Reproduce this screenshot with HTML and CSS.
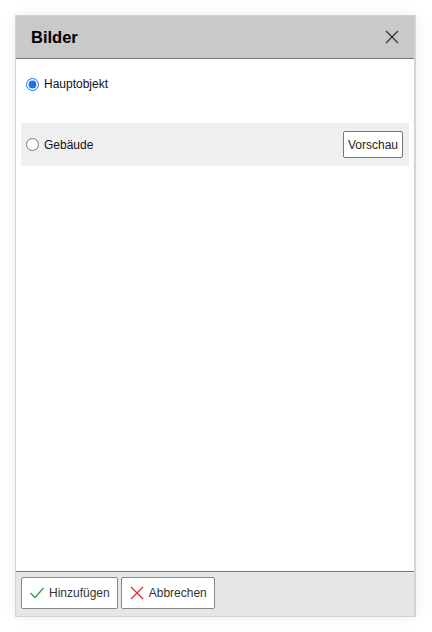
FILE: index.html
```html
<!DOCTYPE html>
<html lang="de">
<head>
  <meta charset="UTF-8">
  <title>Bilder</title>
  <link rel="stylesheet" href="styles.css">
</head>
<body>

<div class="dialog">
  <div class="dialog-header">
    <h2>Bilder</h2>
    <span class="close">
      <svg width="14" height="14" viewBox="0 0 14 14"><path d="M1 1 L13 13 M13 1 L1 13" stroke="#333" stroke-width="1.3" fill="none"/></svg>
    </span>
  </div>

  <div class="dialog-body">
    <label class="row">
      <input type="radio" name="bild" checked>
      <span>Hauptobjekt</span>
    </label>
    <label class="row row-alt">
      <input type="radio" name="bild">
      <span>Gebäude</span>
      <button class="btn-preview">Vorschau</button>
    </label>
  </div>

  <div class="dialog-footer">
    <button class="btn">
      <svg width="14" height="12" viewBox="0 0 14 12"><path d="M0.5 6 L5 10.5 L13.5 1" stroke="#27a04a" stroke-width="1.3" fill="none"/></svg>
      Hinzufügen
    </button>
    <button class="btn">
      <svg width="14" height="14" viewBox="0 0 14 14"><path d="M1 1 L13 13 M13 1 L1 13" stroke="#e52b2b" stroke-width="1.3" fill="none"/></svg>
      Abbrechen
    </button>
  </div>
</div>

</body>
</html>
```

FILE: styles.css
```css
* {
  margin: 0;
  padding: 0;
  box-sizing: border-box;
}

body {
  font-family: 'Liberation Sans', Arial, sans-serif;
  font-size: 12px;
  color: #111;
  background: #fff;
  padding: 15px;
}

.dialog {
  width: 401px;
  height: 602px;
  border: 1px solid #d4d4d4;
  border-right-width: 2px;
  display: flex;
  flex-direction: column;
  box-shadow: 0 0 12px rgba(0, 0, 0, 0.08);
  background: #fff;
}

.dialog-header {
  height: 43px;
  background: #c8c9c8;
  border-bottom: 1px solid #777;
  display: flex;
  align-items: center;
  justify-content: space-between;
  padding: 0 15px 0 15px;
}

.dialog-header h2 {
  font-size: 16.5px;
  font-weight: bold;
  color: #000;
}

.close {
  display: flex;
  cursor: pointer;
}

.dialog-body {
  flex: 1;
  padding: 5px;
  display: flex;
  flex-direction: column;
  gap: 19px;
}

.row {
  display: flex;
  align-items: center;
  height: 40px;
  padding: 0 6px 0 5px;
}

.row input {
  width: 13px;
  height: 13px;
  margin: 0 5px 0 0;
  accent-color: #1a73e8;
}

.row-alt {
  height: 43px;
  background: #efefef;
}

.btn-preview {
  margin-left: auto;
  height: 27px;
  width: 60px;
  font-family: inherit;
  font-size: 12px;
  color: #222;
  background: #fff;
  border: 1px solid #777;
  border-radius: 2px;
}

.dialog-footer {
  height: 45px;
  background: #e5e6e5;
  border-top: 1px solid #777;
  display: flex;
  gap: 3px;
  padding: 5px 5px;
}

.btn {
  height: 32px;
  display: flex;
  align-items: center;
  gap: 5px;
  padding: 0 7px 0 8px;
  font-family: inherit;
  font-size: 12px;
  color: #333;
  background: #fff;
  border: 1px solid #888;
  border-radius: 2px;
}
```
